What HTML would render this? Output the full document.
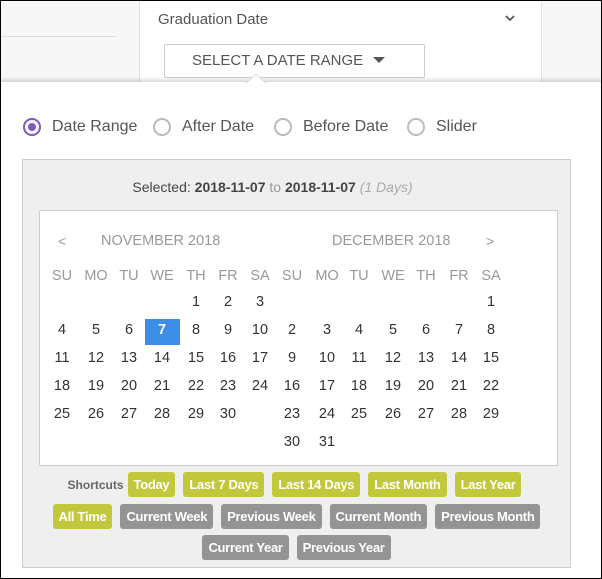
<!DOCTYPE html>
<html><head><style>
*{margin:0;padding:0;box-sizing:border-box}
body{width:602px;height:579px;position:relative;overflow:hidden;font-family:"Liberation Sans",Arial,sans-serif;background:#fff}
.a{position:absolute}
.frame{position:absolute;left:0;top:0;width:602px;height:579px;border:1px solid #000;pointer-events:none;z-index:10}
.d{position:absolute;width:32px;text-align:center;font-size:14.5px;color:#333;transform:translateX(-16px)}
.h{color:#999}
.btn{display:inline-block;height:25px;line-height:25px;padding:0 6px;border-radius:3px;color:#fff;font-size:13px;font-weight:bold;margin:0 4px;letter-spacing:-0.3px}
.g{background:#c2c83b}.gr{background:#949494}
.r{position:absolute;width:18px;height:18px;border:2px solid #bbb;border-radius:50%;top:118px}
.rt{position:absolute;top:118px;font-size:16px;color:#555;white-space:nowrap}
</style></head><body>
<div class="a" style="left:0;top:0;width:602px;height:82px;background:#f7f7f7"></div>
<div class="a" style="left:0;top:36px;width:115px;height:1px;background:#ddd"></div>
<div class="a" style="left:139px;top:0;width:403px;height:82px;background:#fff;border-left:1px solid #e2e2e2;border-right:1px solid #e2e2e2"></div>
<div class="a" style="left:158px;top:11px;font-size:15px;color:#555">Graduation Date</div>
<svg class="a" style="left:504px;top:13px" width="12" height="10"><path d="M2 3l4 4 4-4" stroke="#555" stroke-width="1.8" fill="none"/></svg>
<div class="a" style="left:164px;top:44px;width:261px;height:34px;border:1px solid #ccc;border-radius:2px;background:#fff;font-size:15px;color:#555;line-height:32px;padding-left:27px">SELECT A DATE RANGE <span style="display:inline-block;width:0;height:0;border-left:6px solid transparent;border-right:6px solid transparent;border-top:6px solid #555;vertical-align:2px;margin-left:6px"></span></div>
<div class="a" style="left:0;top:82px;width:602px;height:497px;background:#fff;box-shadow:0 -2px 4px rgba(0,0,0,.18)"></div>
<div class="a" style="left:249px;top:76px;width:14px;height:14px;background:#fff;transform:rotate(45deg);border-left:1px solid #ddd;border-top:1px solid #ddd"></div>
<span class="r" style="left:23px;border-color:#7e57c2"><span style="position:absolute;left:3px;top:3px;width:8px;height:8px;border-radius:50%;background:#7e57c2"></span></span>
<span class="rt" style="left:52px">Date Range</span>
<span class="r" style="left:153px"></span><span class="rt" style="left:182px">After Date</span>
<span class="r" style="left:274px"></span><span class="rt" style="left:303px">Before Date</span>
<span class="r" style="left:407px"></span><span class="rt" style="left:436px">Slider</span>
<div class="a" style="left:22px;top:159px;width:549px;height:409px;background:#efefef;border:1px solid #ccc"></div>
<div class="a" style="left:0;top:179px;width:545px;text-align:center;font-size:14px;color:#444">Selected: <b>2018-11-07</b> <span style="color:#999">to</span> <b>2018-11-07</b> <i style="color:#aaa">(1 Days)</i></div>
<div class="a" style="left:39px;top:210px;width:519px;height:256px;background:#fff;border:1px solid #ccc;border-radius:2px"></div>
<div class="a h" style="left:58px;top:233px;font-size:14px">&lt;</div>
<div class="a h" style="left:101px;top:233px;font-size:14.5px">NOVEMBER 2018</div>
<div class="a h" style="left:332px;top:233px;font-size:14.5px">DECEMBER 2018</div>
<div class="a h" style="left:486px;top:233px;font-size:14px">&gt;</div>
<div class="a" style="left:145px;top:319px;width:35px;height:26px;background:#3d8ee6"></div>
<div id="cal"></div>
<script>
var nx=[62,96,129,162,196,228,260],dx=[292,327,359,393,426,459,491],dn=['SU','MO','TU','WE','TH','FR','SA'],ry=[294,322,350,378,406,434],h='';
for(var i=0;i<7;i++){h+='<div class="d h" style="left:'+nx[i]+'px;top:268px">'+dn[i]+'</div><div class="d h" style="left:'+dx[i]+'px;top:268px">'+dn[i]+'</div>';}
for(var d=1;d<=30;d++){var p=d+3,c=p%7,r=Math.floor(p/7);h+='<div class="d" style="left:'+nx[c]+'px;top:'+ry[r]+'px;'+(d==7?'color:#fff;font-weight:bold':'')+'">'+d+'</div>';}
for(var d=1;d<=31;d++){var p=d+5,c=p%7,r=Math.floor(p/7);h+='<div class="d" style="left:'+dx[c]+'px;top:'+ry[r]+'px">'+d+'</div>';}
document.getElementById('cal').innerHTML=h;
</script>
<div class="a" style="left:22px;top:469px;width:549px;text-align:center;line-height:31px">
<span style="font-size:12px;font-weight:bold;color:#666;margin-right:0">Shortcuts</span><span class="btn g">Today</span><span class="btn g">Last 7 Days</span><span class="btn g">Last 14 Days</span><span class="btn g">Last Month</span><span class="btn g">Last Year</span><br>
<span class="btn g">All Time</span><span class="btn gr">Current Week</span><span class="btn gr">Previous Week</span><span class="btn gr">Current Month</span><span class="btn gr">Previous Month</span><br>
<span class="btn gr">Current Year</span><span class="btn gr">Previous Year</span></div>
<div class="frame"></div>
</body></html>
